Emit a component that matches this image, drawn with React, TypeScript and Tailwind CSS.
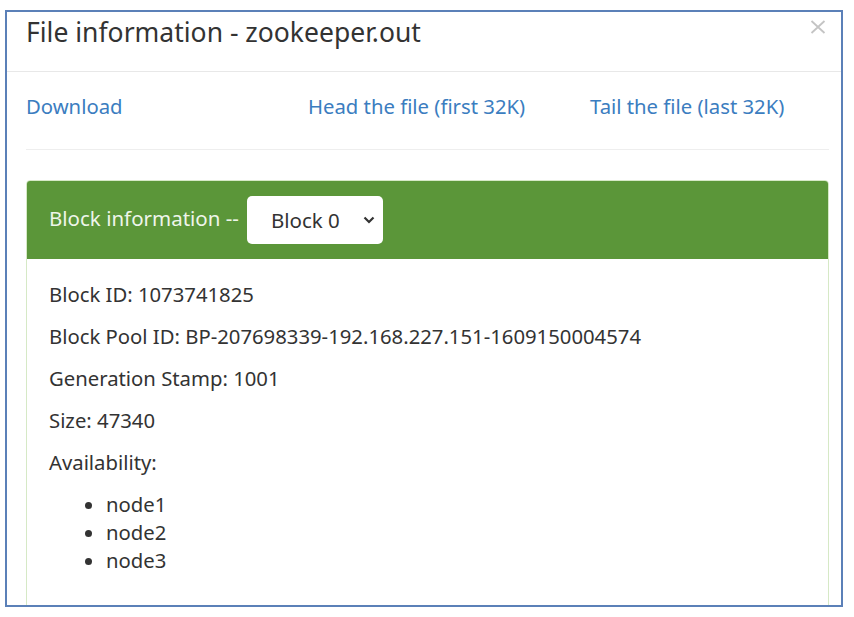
export default function App() {
  const rows = [
    'Block ID: 1073741825',
    'Block Pool ID: BP-207698339-192.168.227.151-1609150004574',
    'Generation Stamp: 1001',
    'Size: 47340',
    'Availability:',
  ];

  return (
    <div
      className="w-[854px] h-[617px] bg-white pt-[10px] pl-[5px] text-[#333]"
      style={{ fontFamily: '"Noto Sans", "Open Sans", Arial, sans-serif' }}
    >
      <div className="w-[838px] h-[597px] border-2 border-[#5b80b8] overflow-hidden flex flex-col">
        {/* modal header */}
        <div className="h-[60px] shrink-0 border-b border-[#e8e8e8] flex justify-between pl-[19px] pr-[15px] pt-[3px]">
          <h4 className="text-[26.5px] leading-[34px] text-[#333]">File information - zookeeper.out</h4>
          <svg width="16" height="14" viewBox="0 0 16 14" className="mt-[5px]">
            <path d="M1.5 1 L14.5 13 M14.5 1 L1.5 13" stroke="#c4c4c4" strokeWidth="1.8" />
          </svg>
        </div>

        {/* modal body */}
        <div className="pl-[19px] pr-[12px]">
          <div className="h-[78px] pt-[20px] border-b border-[#eeeeee] grid grid-cols-[282px_282px_1fr] text-[20.3px] leading-[28px] text-[#3b7dc0]">
            <a href="#">Download</a>
            <a href="#">Head the file (first 32K)</a>
            <a href="#">Tail the file (last 32K)</a>
          </div>

          <div className="mt-[30px] border border-[#d6e9c6] rounded-t-[4px] overflow-hidden">
            <div className="h-[78px] bg-[#5b9639] flex items-center pl-[22px] gap-[8px]">
              <span className="text-[20.5px] leading-[28px] text-[#eef5ea] -mt-[4px]">Block information --</span>
              <div className="w-[136px] h-[48px] bg-white rounded-[5px] flex items-center justify-between pl-[24px] pr-[8px]">
                <span className="text-[20.5px] leading-[28px] text-[#333]">Block 0</span>
                <svg width="12" height="8" viewBox="0 0 12 8">
                  <path d="M1.5 1.5 L6 6 L10.5 1.5" stroke="#333" strokeWidth="2.2" fill="none" />
                </svg>
              </div>
            </div>
            <div className="bg-white px-[22px] pt-[21px] pb-[60px]">
              {rows.map((r) => (
                <p key={r} className="text-[20.3px] leading-[28px] mb-[14px]">{r}</p>
              ))}
              <ul className="list-disc pl-[57px] mt-[5px] text-[20.3px] leading-[28px]">
                <li>node1</li>
                <li>node2</li>
                <li>node3</li>
              </ul>
            </div>
          </div>
        </div>
      </div>
    </div>
  );
}
